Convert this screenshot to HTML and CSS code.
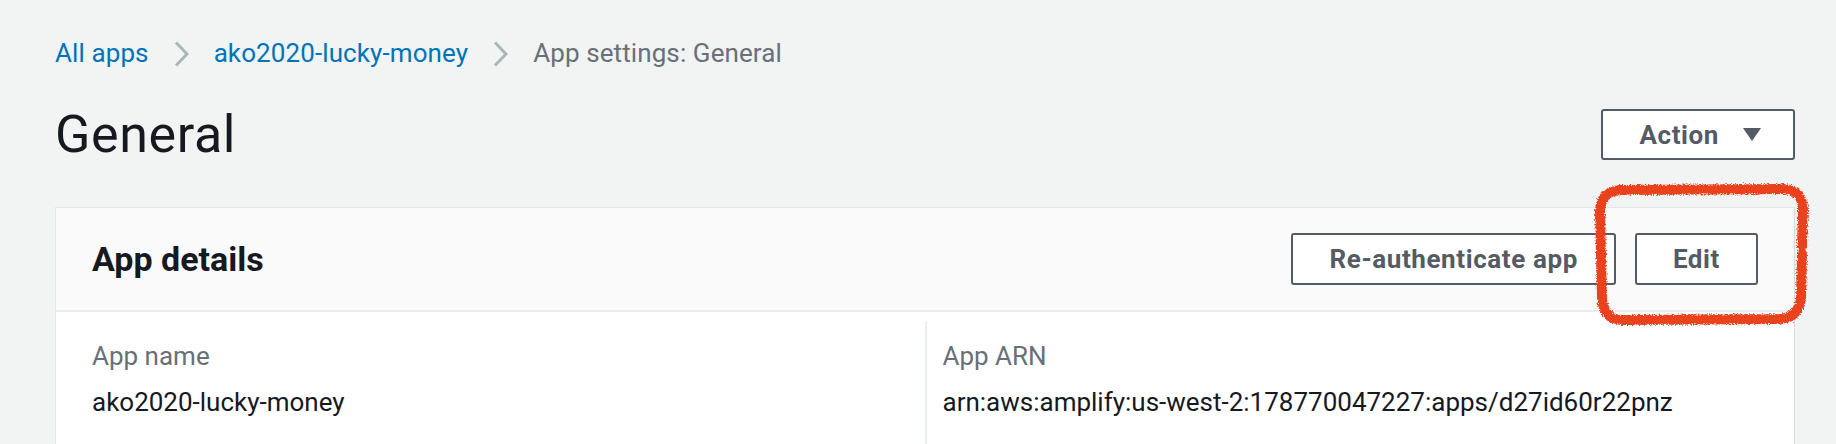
FILE: index.html
```html
<!DOCTYPE html>
<html lang="en">
<head>
<meta charset="utf-8">
<title>App settings: General</title>
<link rel="stylesheet" href="styles.css">
</head>
<body>
<div class="page">
  <nav class="breadcrumbs">
    <a class="crumb-link" href="#">All apps</a>
    <svg class="chev" width="15" height="26" viewBox="0 0 15 26"><polyline points="2,1.5 13,13 2,24.5" fill="none" stroke="#aab7b8" stroke-width="3"/></svg>
    <a class="crumb-link" href="#">ako2020-lucky-money</a>
    <svg class="chev" width="15" height="26" viewBox="0 0 15 26"><polyline points="2,1.5 13,13 2,24.5" fill="none" stroke="#aab7b8" stroke-width="3"/></svg>
    <span class="crumb-current">App settings: General</span>
  </nav>

  <header class="page-header">
    <h1 class="page-title">General</h1>
    <button class="btn btn-action">Action
      <svg class="caret" width="18" height="13" viewBox="0 0 18 13"><polygon points="0,0 18,0 9,13" fill="#545b64"/></svg>
    </button>
  </header>

  <section class="card">
    <div class="card-header">
      <h2 class="card-title">App details</h2>
      <div class="card-actions">
        <button class="btn">Re-authenticate app</button>
        <button class="btn">Edit</button>
      </div>
    </div>
    <div class="card-body">
      <div class="col">
        <div class="label">App name</div>
        <div class="value">ako2020-lucky-money</div>
      </div>
      <div class="col col-divided">
        <div class="label">App ARN</div>
        <div class="value">arn:aws:amplify:us-west-2:178770047227:apps/d27id60r22pnz</div>
      </div>
    </div>
  </section>
</div>

<svg class="annot" width="228" height="156" viewBox="0 0 228 156">
  <defs>
    <filter id="rough" x="-10%" y="-10%" width="120%" height="120%">
      <feTurbulence type="fractalNoise" baseFrequency="0.8" numOctaves="2" seed="3" result="n"/>
      <feDisplacementMap in="SourceGraphic" in2="n" scale="5" xChannelSelector="R" yChannelSelector="G"/>
    </filter>
  </defs>
  <g filter="url(#rough)">
    <path d="M 30 8 L 192 7 Q 212 8 212 28 L 211 64" fill="none" stroke="#e9421f" stroke-width="10" stroke-linecap="round"/>
    <path d="M 211 72 L 210 116 Q 208 136 188 137 L 32 138 Q 12 138 11 116 L 9 30 Q 9 9 30 8" fill="none" stroke="#e9421f" stroke-width="10" stroke-linecap="round"/>
  </g>
</svg>
</body>
</html>
```

FILE: styles.css
```css
html, body {
  margin: 0;
  padding: 0;
  background: #f2f3f3;
  overflow: hidden;
}

body {
  font-family: Roboto, "Liberation Sans", Arial, sans-serif;
  color: #16191f;
  position: relative;
  height: 444px;
}

.page {
  padding: 36px 41px 0 55px;
}

.breadcrumbs {
  display: flex;
  align-items: center;
  gap: 25px;
  font-size: 26px;
  line-height: 35px;
  letter-spacing: 0.1px;
}

.crumb-link {
  color: #0073bb;
  text-decoration: none;
}

.crumb-current {
  color: #687078;
}

.chev {
  display: block;
}

.page-header {
  display: flex;
  align-items: center;
  justify-content: space-between;
  margin-top: 33px;
}

.page-title {
  margin: 0;
  font-size: 52px;
  line-height: 61px;
  font-weight: 400;
  letter-spacing: 0.6px;
  color: #16191f;
}

.btn {
  display: inline-flex;
  align-items: center;
  box-sizing: border-box;
  height: 52px;
  padding: 0 36px;
  border: 2px solid #545b64;
  border-radius: 3px;
  background: #ffffff;
  color: #545b64;
  font-family: Roboto, "Liberation Sans", Arial, sans-serif;
  font-weight: 700;
  font-size: 26px;
  letter-spacing: 0.6px;
  line-height: 1;
}

.btn-action {
  height: 51px;
  padding: 0 32px 0 36px;
  gap: 24px;
}

.caret {
  display: block;
}

.card {
  margin-top: 42px;
  background: #ffffff;
  border: 1px solid #e4e7e7;
  border-right-color: #d5dbdb;
  height: 400px;
}

.card-header {
  display: flex;
  align-items: center;
  justify-content: space-between;
  padding: 25px 36px 25px 36px;
  background: #fafafa;
  border-bottom: 2px solid #eaeded;
}

.card-title {
  margin: 0;
  font-size: 34px;
  line-height: 40px;
  font-weight: 700;
  color: #16191f;
}

.card-actions {
  display: flex;
  gap: 19px;
}

.card-body {
  display: grid;
  grid-template-columns: 1fr 1fr;
  padding: 9px 37px 40px 36px;
  height: 200px;
}

.col {
  padding-top: 17px;
}

.col-divided {
  border-left: 2px solid #eaeded;
  padding-left: 16px;
}

.label {
  font-size: 26px;
  line-height: 36px;
  color: #687078;
}

.value {
  margin-top: 10px;
  font-size: 26px;
  line-height: 36px;
  color: #16191f;
}

.annot {
  position: absolute;
  left: 1591px;
  top: 182px;
}
```
